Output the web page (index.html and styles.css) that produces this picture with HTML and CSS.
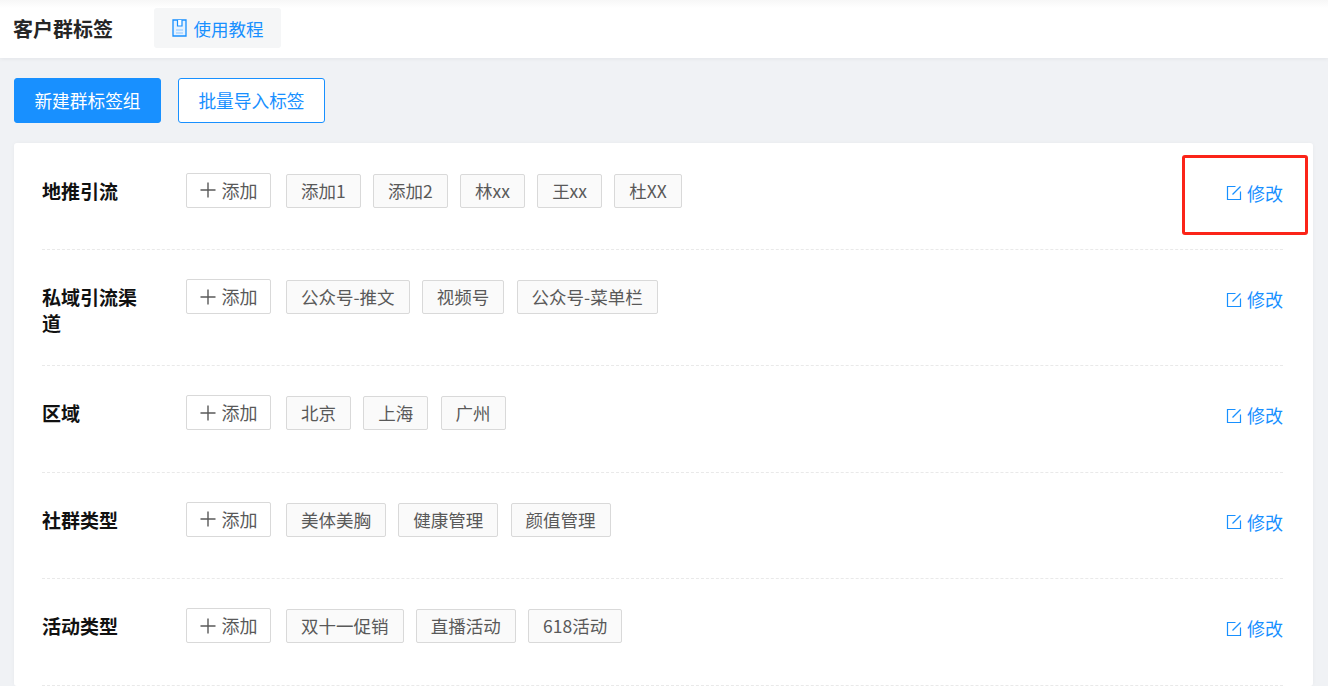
FILE: index.html
```html
<!DOCTYPE html>
<html lang="zh">
<head>
<meta charset="utf-8">
<title>客户群标签</title>
<link rel="stylesheet" href="styles.css">
</head>
<body>
<svg class="defs" width="0" height="0" aria-hidden="true">
  <symbol id="edit" viewBox="0 0 16 16">
    <path d="M9.5 1.5H1.500V14.500H14.500V6.5" fill="none" stroke="currentColor" stroke-width="1.2"/>
    <path d="M6.5 9.5 14.5 1.5" fill="none" stroke="currentColor" stroke-width="1.2"/>
  </symbol>
  <symbol id="plus" viewBox="0 0 16 16">
    <path d="M8 0.5V15.5M0.5 8H15.5" fill="none" stroke="currentColor" stroke-width="1.4"/>
  </symbol>
</svg>
<header class="topbar">
  <h1 class="title">客户群标签</h1>
  <a class="guide">
    <svg class="guide-icon" viewBox="0 0 15 18"><path d="M1 1h13v16H1z" fill="#e6f2ff" stroke="#1890ff" stroke-width="1.300"/><path d="M5.500 1v6h4.500V1" fill="#fff" stroke="#1890ff" stroke-width="1.200"/><path d="M4 11h7M4 14h7" fill="none" stroke="#8cc5ff" stroke-width="1.200"/></svg>
    使用教程
  </a>
</header>
<main class="content">
  <div class="actions">
    <button class="btn btn-primary">新建群标签组</button>
    <button class="btn btn-outline">批量导入标签</button>
  </div>
  <section class="card">
    <div class="row">
      <div class="label">地推引流</div>
      <div class="tags">
        <span class="add"><svg class="plus"><use href="#plus"/></svg>添加</span>
        <span class="tag">添加1</span><span class="tag">添加2</span><span class="tag">林xx</span><span class="tag">王xx</span><span class="tag">杜XX</span>
      </div>
      <a class="edit"><svg class="edit-icon"><use href="#edit"/></svg>修改</a>
    </div>
    <div class="row">
      <div class="label">私域引流渠道</div>
      <div class="tags">
        <span class="add"><svg class="plus"><use href="#plus"/></svg>添加</span>
        <span class="tag">公众号-推文</span><span class="tag">视频号</span><span class="tag">公众号-菜单栏</span>
      </div>
      <a class="edit"><svg class="edit-icon"><use href="#edit"/></svg>修改</a>
    </div>
    <div class="row">
      <div class="label">区域</div>
      <div class="tags">
        <span class="add"><svg class="plus"><use href="#plus"/></svg>添加</span>
        <span class="tag">北京</span><span class="tag">上海</span><span class="tag">广州</span>
      </div>
      <a class="edit"><svg class="edit-icon"><use href="#edit"/></svg>修改</a>
    </div>
    <div class="row">
      <div class="label">社群类型</div>
      <div class="tags">
        <span class="add"><svg class="plus"><use href="#plus"/></svg>添加</span>
        <span class="tag">美体美胸</span><span class="tag">健康管理</span><span class="tag">颜值管理</span>
      </div>
      <a class="edit"><svg class="edit-icon"><use href="#edit"/></svg>修改</a>
    </div>
    <div class="row">
      <div class="label">活动类型</div>
      <div class="tags">
        <span class="add"><svg class="plus"><use href="#plus"/></svg>添加</span>
        <span class="tag">双十一促销</span><span class="tag">直播活动</span><span class="tag">618活动</span>
      </div>
      <a class="edit"><svg class="edit-icon"><use href="#edit"/></svg>修改</a>
    </div>
  </section>
</main>
<div class="highlight"></div>
</body>
</html>
```
FILE: styles.css
```css
* { box-sizing: border-box; }
html, body { height: 100%; }
body {
  margin: 0;
  height: 686px;
  overflow: hidden;
  background: #f0f2f5;
  font-family: "Noto Sans CJK SC", "Liberation Sans", sans-serif;
  font-size: 18px;
  position: relative;
}
.defs { position: absolute; }
.topbar {
  height: 58px;
  padding: 8px 14px 10px 13px;
  background: linear-gradient(#f7f7f7 0, #fff 8px);
  box-shadow: 0 1px 4px rgba(0, 21, 41, 0.06);
  display: flex;
  align-items: center;
  gap: 41px;
}
.title { margin: 2px 0 0; font-size: 20px; font-weight: 700; color: #262626; line-height: 26px; }
.guide {
  height: 40px;
  width: 127px;
  font-size: 17.5px;
  background: #f5f6f7;
  border-radius: 3px;
  color: #1890ff;
  display: flex;
  align-items: center;
  justify-content: center;
  gap: 7px;
  white-space: nowrap;
}
.guide-icon { width: 15px; height: 18px; flex: none; }
.content { padding: 20px 15px 0 14px; }
.actions { display: flex; gap: 17px; margin-bottom: 20px; }
.btn {
  width: 147px;
  height: 45px;
  font: inherit;
  font-size: 17.7px;
  border-radius: 3px;
  border: 1px solid #1890ff;
  padding: 0 0 2px;
}
.btn-primary { background: #1890ff; color: #fff; }
.btn-outline { background: #fff; color: #1890ff; }
.card {
  background: #fff;
  border-radius: 3px;
  padding: 0.6px 30px 0 28px;
  box-shadow: 0 0 4px rgba(0, 21, 41, 0.04);
}
.row {
  min-height: 106.5px;
  padding: 29.2px 0 0;
  border-bottom: 1px dashed #e9e9e9;
  display: flex;
  align-items: flex-start;
}
.label {
  width: 98px;
  margin-right: 46px;
  padding: 5px 0 28.8px;
  font-size: 19px;
  font-weight: 700;
  line-height: 26px;
  color: #111;
  flex: none;
}
.tags { flex: 1; display: flex; gap: 12.25px; align-items: flex-start; }
.add, .tag {
  height: 35px;
  line-height: 33px;
  border: 1px solid #d9d9d9;
  border-radius: 2px;
  color: #595959;
  white-space: nowrap;
}
.add {
  width: 85px;
  margin-right: 2.75px;
  background: #fff;
  display: flex;
  align-items: center;
  justify-content: center;
  gap: 6px;
}
.tag { margin-top: 1px; height: 34px; line-height: 32px; padding: 0 14px; font-size: 17.5px; background: #fafafa; }
.plus { width: 16px; height: 16px; color: #595959; }
.edit {
  margin-top: 4.2px;
  color: #1890ff;
  line-height: 33px;
  display: flex;
  align-items: center;
  gap: 5px;
}
.edit-icon { width: 16px; height: 16px; }
.highlight {
  position: absolute;
  left: 1182px;
  top: 155px;
  width: 126px;
  height: 80px;
  border: 3px solid #fb2418;
  border-radius: 3px;
}
```
